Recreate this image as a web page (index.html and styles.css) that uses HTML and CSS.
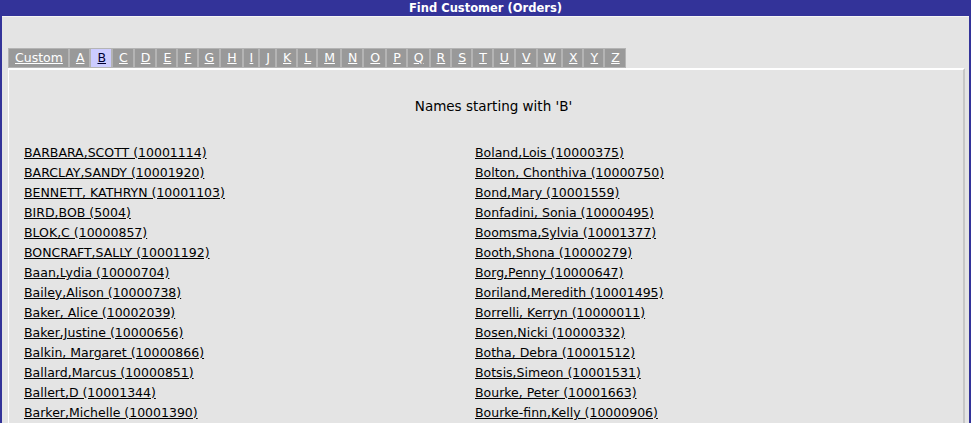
FILE: index.html
```html
<!DOCTYPE html>
<html lang="en">
<head>
    <meta charset="UTF-8">
    <title>Find Customer (Orders)</title>
    <link rel="stylesheet" href="styles.css">
</head>
<body>
    <div class="frame">
        <div class="title">Find Customer (Orders)</div>
        <div class="main">
            <div class="tabs">
                <a class="tab" href="#">Custom</a><a class="tab" href="#">A</a><a class="tab active" href="#">B</a><a class="tab" href="#">C</a><a class="tab" href="#">D</a><a class="tab" href="#">E</a><a class="tab" href="#">F</a><a class="tab" href="#">G</a><a class="tab" href="#">H</a><a class="tab" href="#">I</a><a class="tab" href="#">J</a><a class="tab" href="#">K</a><a class="tab" href="#">L</a><a class="tab" href="#">M</a><a class="tab" href="#">N</a><a class="tab" href="#">O</a><a class="tab" href="#">P</a><a class="tab" href="#">Q</a><a class="tab" href="#">R</a><a class="tab" href="#">S</a><a class="tab" href="#">T</a><a class="tab" href="#">U</a><a class="tab" href="#">V</a><a class="tab" href="#">W</a><a class="tab" href="#">X</a><a class="tab" href="#">Y</a><a class="tab" href="#">Z</a>
            </div>
            <div class="panel">
                <div class="heading">Names starting with 'B'</div>
                <div class="names">
                    <div class="col">
                        <a href="#">BARBARA,SCOTT (10001114)</a>
                        <a href="#">BARCLAY,SANDY (10001920)</a>
                        <a href="#">BENNETT, KATHRYN (10001103)</a>
                        <a href="#">BIRD,BOB (5004)</a>
                        <a href="#">BLOK,C (10000857)</a>
                        <a href="#">BONCRAFT,SALLY (10001192)</a>
                        <a href="#">Baan,Lydia (10000704)</a>
                        <a href="#">Bailey,Alison (10000738)</a>
                        <a href="#">Baker, Alice (10002039)</a>
                        <a href="#">Baker,Justine (10000656)</a>
                        <a href="#">Balkin, Margaret (10000866)</a>
                        <a href="#">Ballard,Marcus (10000851)</a>
                        <a href="#">Ballert,D (10001344)</a>
                        <a href="#">Barker,Michelle (10001390)</a>
                    </div>
                    <div class="col">
                        <a href="#">Boland,Lois (10000375)</a>
                        <a href="#">Bolton, Chonthiva (10000750)</a>
                        <a href="#">Bond,Mary (10001559)</a>
                        <a href="#">Bonfadini, Sonia (10000495)</a>
                        <a href="#">Boomsma,Sylvia (10001377)</a>
                        <a href="#">Booth,Shona (10000279)</a>
                        <a href="#">Borg,Penny (10000647)</a>
                        <a href="#">Boriland,Meredith (10001495)</a>
                        <a href="#">Borrelli, Kerryn (10000011)</a>
                        <a href="#">Bosen,Nicki (10000332)</a>
                        <a href="#">Botha, Debra (10001512)</a>
                        <a href="#">Botsis,Simeon (10001531)</a>
                        <a href="#">Bourke, Peter (10001663)</a>
                        <a href="#">Bourke-finn,Kelly (10000906)</a>
                    </div>
                </div>
            </div>
        </div>
    </div>
</body>
</html>
```

FILE: styles.css
```css
html, body {
    margin: 0;
    overflow: hidden;
}
body {
    font-family: "DejaVu Sans", Verdana, sans-serif;
    font-size: 12.5px;
    background: #e4e4e4;
    color: #000;
}
.frame {
    border-left: 2px solid #333399;
    border-right: 2px solid #333399;
    min-height: 423px;
}
.title {
    background: #333399;
    color: #fff;
    font-weight: bold;
    font-size: 11.5px;
    text-align: center;
    height: 16px;
    line-height: 16px;
    border-bottom: 1px solid #f4f4f4;
}
.main {
    padding: 31px 4px 0 6px;
}
.tabs {
    display: flex;
    height: 20px;
}
.tab {
    background: #999;
    color: #fff;
    border: 1px solid #b4b4b4;
    padding: 0 5px 0 6px;
    line-height: 18px;
}
.tab.active {
    background: #ccccff;
    color: #000033;
}
.panel {
    border-top: 2px solid #fff;
    border-left: 1px solid #fff;
    border-right: 2px solid #c6c6c6;
    padding: 28px 0 0 15px;
}
.heading {
    text-align: center;
    font-size: 13.5px;
    margin-bottom: 29px;
}
.names {
    display: grid;
    grid-template-columns: 451px 1fr;
}
.col {
    display: flex;
    flex-direction: column;
}
.col a {
    color: #000;
    line-height: 20px;
    align-self: flex-start;
}
```
